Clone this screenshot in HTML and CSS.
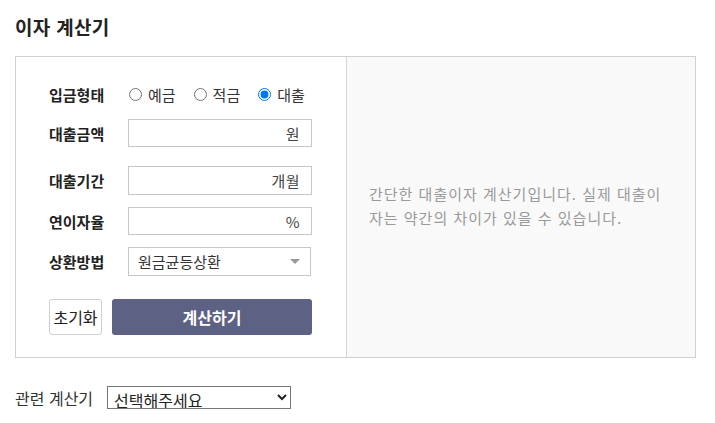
FILE: index.html
```html
<!DOCTYPE html>
<html lang="ko">
<head>
<meta charset="utf-8">
<link rel="stylesheet" href="styles.css">
</head>
<body>
<h1 class="title">이자 계산기</h1>
<div class="calc">
  <div class="form">
    <div class="row row-radio">
      <span class="label">입금형태</span>
      <div class="radios">
        <label class="radio"><input type="radio" name="t">예금</label>
        <label class="radio"><input type="radio" name="t">적금</label>
        <label class="radio"><input type="radio" name="t" checked>대출</label>
      </div>
    </div>
    <div class="row row-1">
      <span class="label">대출금액</span>
      <div class="field"><input type="text"><span class="unit">원</span></div>
    </div>
    <div class="row row-2">
      <span class="label">대출기간</span>
      <div class="field"><input type="text"><span class="unit">개월</span></div>
    </div>
    <div class="row row-3">
      <span class="label">연이자율</span>
      <div class="field"><input type="text"><span class="unit">%</span></div>
    </div>
    <div class="row row-4">
      <span class="label">상환방법</span>
      <div class="selectwrap"><select class="method"><option>원금균등상환</option></select></div>
    </div>
    <div class="buttons">
      <button class="btn-reset">초기화</button>
      <button class="btn-calc">계산하기</button>
    </div>
  </div>
  <div class="info">
    <p class="info-text">간단한 대출이자 계산기입니다. 실제 대출이자는 약간의 차이가 있을 수 있습니다.</p>
  </div>
</div>
<div class="related">
  <span class="related-label">관련 계산기</span>
  <select class="related-select"><option>선택해주세요</option></select>
</div>
</body>
</html>
```

FILE: styles.css
```css
* { box-sizing: border-box; }
body {
  margin: 0;
  padding: 0 15px;
  font-family: "Noto Sans CJK KR", "Noto Sans", sans-serif;
  color: #222;
  background: #fff;
}
.title {
  font-size: 19px;
  font-weight: bold;
  line-height: 26px;
  margin: 14px 0 16px;
  color: #222;
  letter-spacing: 0.3px;
}
.calc {
  display: grid;
  grid-template-columns: 331px 1fr;
  width: 681px;
  height: 302px;
  border: 1px solid #d0d0d0;
}
.form {
  padding: 23px 0 0 33px;
  border-right: 1px solid #d6d6d6;
}
.row {
  display: flex;
  align-items: center;
  height: 28px;
}
.row-1 { margin-top: 11px; }
.row-2 { margin-top: 19px; height: 29px; }
.row-3 { margin-top: 12px; }
.row-4 { margin-top: 12px; height: 29px; }
.label {
  width: 79px;
  font-size: 15px;
  font-weight: bold;
  color: #222;
}
.radios {
  display: flex;
  font-size: 15px;
  color: #333;
}
.radio {
  display: flex;
  align-items: center;
  margin-right: 17px;
}
.radio input {
  margin: 0 6px 0 1px;
  width: 13px;
  height: 13px;
}
.field {
  display: flex;
  align-items: center;
  width: 184px;
  height: 100%;
  border: 1px solid #c6c6c6;
}
.field input {
  flex: 1;
  min-width: 0;
  border: 0;
  height: 100%;
  outline: none;
  background: transparent;
}
.unit {
  font-size: 15px;
  color: #444;
  padding-right: 11px;
  letter-spacing: 0.5px;
}
.selectwrap {
  position: relative;
  width: 183px;
  height: 100%;
}
.selectwrap::after {
  content: "";
  position: absolute;
  right: 11px;
  top: 12px;
  border-left: 5px solid transparent;
  border-right: 5px solid transparent;
  border-top: 5px solid #999;
}
.method {
  appearance: none;
  -webkit-appearance: none;
  width: 100%;
  height: 100%;
  border: 1px solid #c6c6c6;
  border-radius: 0;
  background: #fff;
  font-family: inherit;
  font-size: 15px;
  color: #333;
  padding: 0 0 0 9px;
}
.buttons {
  display: flex;
  gap: 10px;
  margin-top: 23px;
  height: 36px;
}
.btn-reset {
  width: 53px;
  height: 36px;
  border: 1px solid #cfcfcf;
  border-radius: 3px;
  background: #fff;
  font-family: inherit;
  font-size: 16px;
  color: #222;
  padding: 0;
}
.btn-calc {
  width: 200px;
  height: 36px;
  border: 0;
  border-radius: 3px;
  background: #5d6284;
  color: #fff;
  font-family: inherit;
  font-size: 16px;
  font-weight: bold;
  padding: 0;
}
.info {
  background: #f9f9f9;
  display: flex;
  align-items: center;
  padding: 0 0 2px 22px;
}
.info-text {
  margin: 0;
  width: 298px;
  font-size: 15px;
  letter-spacing: 1px;
  line-height: 24px;
  color: #9a9a9a;
}
.related {
  display: flex;
  align-items: center;
  margin-top: 28px;
  height: 23px;
}
.related-label {
  font-size: 16px;
  color: #333;
  margin-right: 14px;
}
.related-select {
  width: 184px;
  height: 23px;
  font-family: inherit;
  font-size: 16px;
  color: #222;
  border: 1px solid #767676;
  border-radius: 0;
  background: #fff;
  padding: 0 0 0 2px;
}
```
